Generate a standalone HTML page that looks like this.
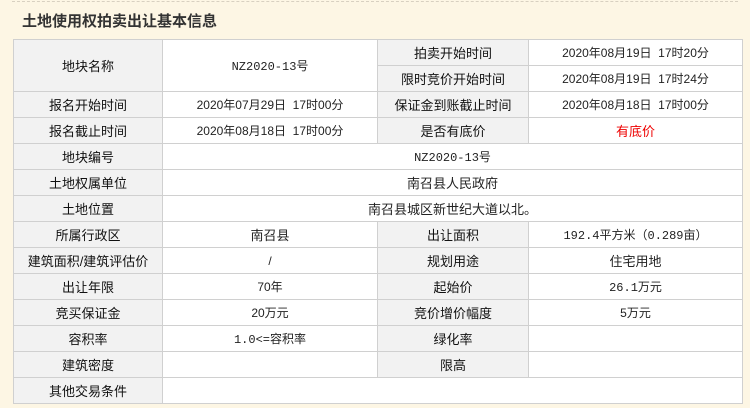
<!DOCTYPE html>
<html><head><meta charset="utf-8"><style>
html,body{margin:0;padding:0;}
body{width:750px;height:408px;background:#fdf6e4;font-family:"Liberation Sans","Noto Sans CJK SC",sans-serif;position:relative;overflow:hidden;}
.dash{position:absolute;left:12px;right:12px;top:1px;border-top:1px dashed #d8d0c0;}
.title{position:absolute;left:22px;top:10px;font-size:15px;font-weight:bold;color:#333;}
table{position:absolute;left:13px;top:39px;border-collapse:collapse;table-layout:fixed;width:729px;}
td{border:1px solid #d0d0d0;height:25px;padding:0;text-align:center;font-size:12px;color:#222;background:#fff;}
td.l{background:#f2f2f2;font-size:13px;color:#111;}
.red{color:#e00;font-size:13px;}
.m{font-family:"Liberation Mono","Noto Sans CJK SC",monospace;font-size:12px;}
</style></head><body>
<div class="dash"></div>
<div class="title">土地使用权拍卖出让基本信息</div>
<table>
<colgroup><col style="width:149px"><col style="width:215px"><col style="width:151px"><col style="width:214px"></colgroup>
<tr><td class="l" rowspan="2" style="height:51px">地块名称</td><td rowspan="2" class="m">NZ2020-13号</td><td class="l">拍卖开始时间</td><td>2020年08月19日&nbsp; 17时20分</td></tr>
<tr><td class="l">限时竞价开始时间</td><td>2020年08月19日&nbsp; 17时24分</td></tr>
<tr><td class="l">报名开始时间</td><td>2020年07月29日&nbsp; 17时00分</td><td class="l">保证金到账截止时间</td><td>2020年08月18日&nbsp; 17时00分</td></tr>
<tr><td class="l">报名截止时间</td><td>2020年08月18日&nbsp; 17时00分</td><td class="l">是否有底价</td><td class="red">有底价</td></tr>
<tr><td class="l">地块编号</td><td colspan="3" class="m">NZ2020-13号</td></tr>
<tr><td class="l">土地权属单位</td><td colspan="3" style="font-size:13px">南召县人民政府</td></tr>
<tr><td class="l">土地位置</td><td colspan="3" style="font-size:13px">南召县城区新世纪大道以北。</td></tr>
<tr><td class="l">所属行政区</td><td style="font-size:13px">南召县</td><td class="l">出让面积</td><td class="m">192.4平方米（0.289亩）</td></tr>
<tr><td class="l">建筑面积/建筑评估价</td><td>/</td><td class="l">规划用途</td><td style="font-size:13px">住宅用地</td></tr>
<tr><td class="l">出让年限</td><td>70年</td><td class="l">起始价</td><td class="m">26.1万元</td></tr>
<tr><td class="l">竞买保证金</td><td>20万元</td><td class="l">竞价增价幅度</td><td>5万元</td></tr>
<tr><td class="l">容积率</td><td class="m">1.0&lt;=容积率</td><td class="l">绿化率</td><td></td></tr>
<tr><td class="l">建筑密度</td><td></td><td class="l">限高</td><td></td></tr>
<tr><td class="l">其他交易条件</td><td colspan="3"></td></tr>
</table>
</body></html>
